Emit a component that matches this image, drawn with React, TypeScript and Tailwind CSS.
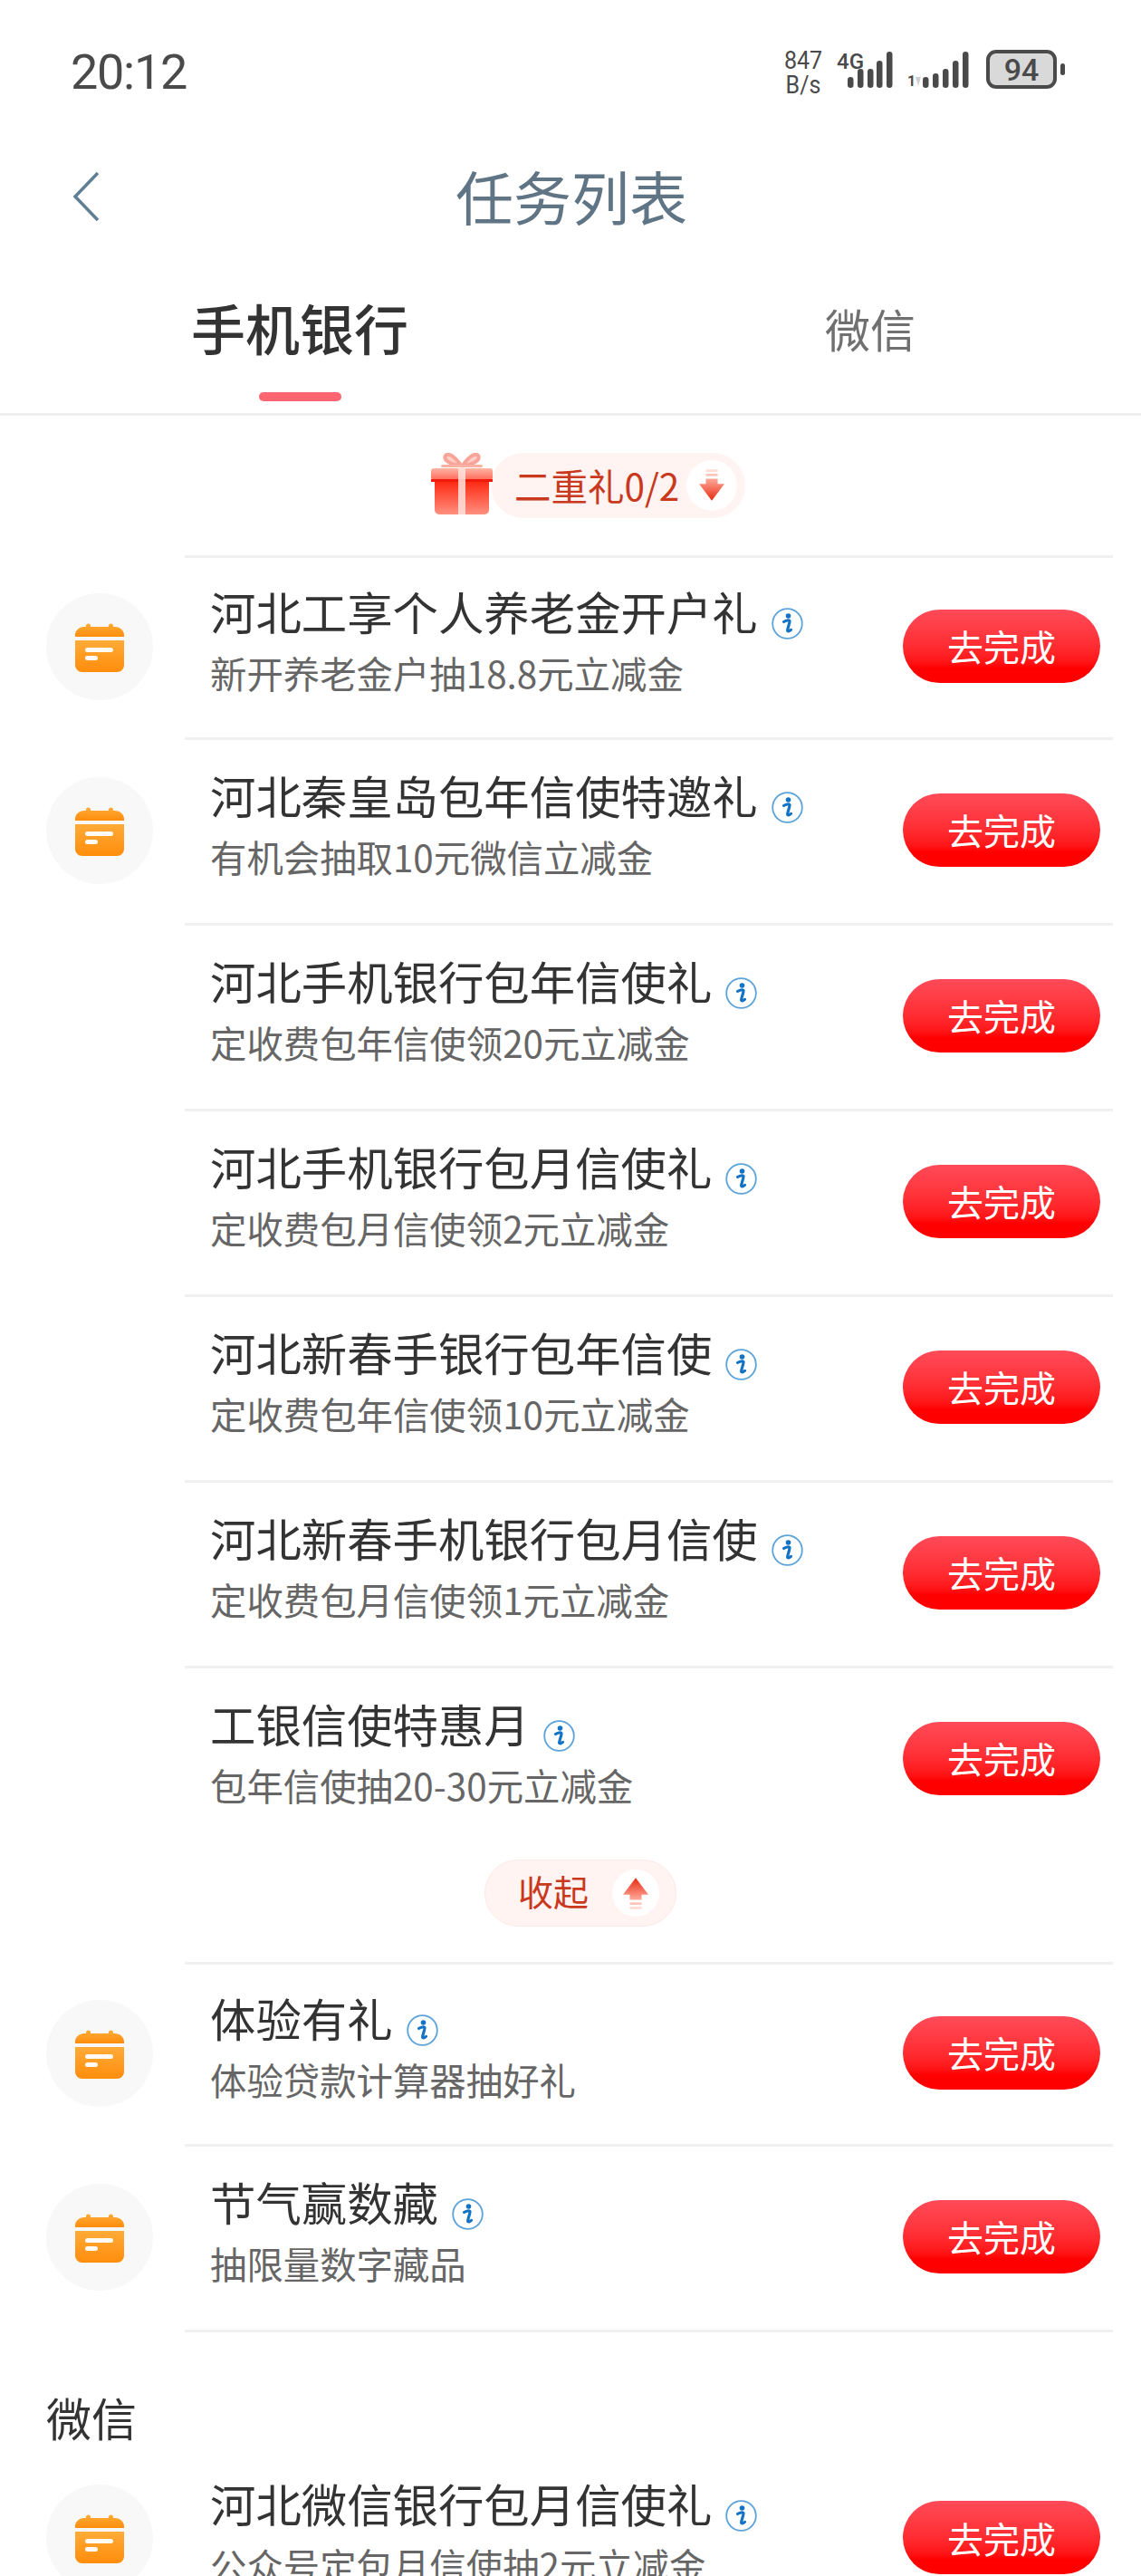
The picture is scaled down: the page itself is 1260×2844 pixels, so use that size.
import React from "react";

const FONT = "font-['Noto_Sans_CJK_SC','Noto_Sans_CJK_SC',sans-serif]";

function Bars({ tops, xs, w, id }: { tops: number[]; xs: number[]; w: number; id: string }) {
  return (
    <svg width={w} height="44" viewBox={`0 0 ${w} 44`} aria-label={id}>
      {xs.map((x, i) => (
        <rect key={i} x={x} y={tops[i]} width="6.5" height={42 - tops[i]} rx="3.2" fill="#4a4a4a" />
      ))}
    </svg>
  );
}

function Calendar() {
  return (
    <svg width="54" height="56" viewBox="0 0 54 56">
      <defs>
        <linearGradient id="cal" x1="0" y1="0" x2="0" y2="1">
          <stop offset="0" stopColor="#ffab38" />
          <stop offset="1" stopColor="#ff8d0c" />
        </linearGradient>
      </defs>
      <path d="M12 5a2.500 2.500 0 0 1 5 0v1h20V5a2.500 2.500 0 0 1 5 0v1h2c5.500 0 10 4 10 9v2H0v-2c0-5 4.500-9 10-9h2z" fill="url(#cal)" />
      <path d="M0 21h54v27c0 4.500-3.500 8-8 8H8c-4.500 0-8-3.500-8-8z" fill="url(#cal)" />
      <rect x="11" y="29" width="31" height="5" rx="2.500" fill="#fff" opacity="0.95" />
      <rect x="11" y="38" width="14" height="5" rx="2.500" fill="#fff" opacity="0.95" />
    </svg>
  );
}

function Info() {
  return (
    <svg width="35" height="35" viewBox="0 0 35 35" className="shrink-0">
      <circle cx="17.500" cy="17.500" r="16.300" fill="#fff" stroke="#5ba3d9" strokeWidth="1.800" />
      <circle cx="18.500" cy="9" r="2.800" fill="#1273c4" />
      <path d="M13.500 15.500c2-1.300 6-2.300 6.500-1 .4 1.500-2.400 8.500-2.400 10.500 0 1.500 2 1 3.900-.6" fill="none" stroke="#1273c4" strokeWidth="3.200" strokeLinecap="round" />
    </svg>
  );
}

function ArrowDown({ up = false }: { up?: boolean }) {
  const gid = up ? "arrU" : "arrD";
  return (
    <svg width="28" height="36" viewBox="0 0 30 38" className={up ? "rotate-180" : ""}>
      <defs>
        <linearGradient id={gid} x1="0" y1="0" x2="0" y2="1">
          <stop offset="0" stopColor="#ffa99a" />
          <stop offset="1" stopColor="#e82a10" />
        </linearGradient>
      </defs>
      <rect x="8" y="0" width="14" height="3" fill="#ffdcd5" />
      <rect x="8" y="5" width="14" height="3" fill="#ffc6ba" />
      <path d="M8 11h14v6h8L15 37 0 17h8z" fill={`url(#${gid})`} />
    </svg>
  );
}

function Gift() {
  return (
    <svg width="70" height="70" viewBox="0 0 70 70" className="shrink-0">
      <defs>
        <linearGradient id="giftBody" x1="0" y1="0" x2="0" y2="1">
          <stop offset="0" stopColor="#ff2a12" />
          <stop offset="1" stopColor="#ff9080" />
        </linearGradient>
        <linearGradient id="giftLid" x1="0" y1="0" x2="0" y2="1">
          <stop offset="0" stopColor="#ffb4a6" />
          <stop offset="1" stopColor="#ff6a58" />
        </linearGradient>
      </defs>
      <path d="M34 14C27 3 20 0 17 3c-3 4 4 10 17 11zM36 14C43 3 50 0 53 3c3 4-4 10-17 11z" fill="#fcd0c8" stroke="#f9a498" strokeWidth="4" />
      <rect x="12" y="13" width="46" height="3" rx="1.500" fill="#fbb0a4" />
      <rect x="1" y="17" width="68" height="13" rx="3" fill="url(#giftLid)" />
      <rect x="1" y="29" width="68" height="3" fill="#f01a0a" />
      <path d="M5 32h60v31a5 5 0 0 1-5 5H10a5 5 0 0 1-5-5z" fill="url(#giftBody)" />
      <rect x="31" y="17" width="8" height="51" fill="#ffe3de" opacity="0.85" />
    </svg>
  );
}

function RowText({ title, sub }: { title: string; sub: string }) {
  return (
    <>
      <div className="flex items-center h-[72px]">
        <span className="text-[50.4px] leading-[72px] text-[#333333] whitespace-nowrap">{title}</span>
        <span className="ml-[15px] mt-[26px] flex"><Info /></span>
      </div>
      <div className="mt-[4px] text-[40.4px] leading-[56px] text-[#666666] whitespace-nowrap">{sub}</div>
    </>
  );
}

function Row({ title, sub, icon, h = "h-[205px]" }: { title: string; sub: string; icon?: boolean; h?: string }) {
  return (
    <div className={`flex ${h} shrink-0`}>
      <div className="w-[204px] shrink-0 pl-[51px] flex items-center">
        {icon && (
          <div className="w-[118px] h-[118px] rounded-full bg-[#f8f8f8] flex items-center justify-center">
            <Calendar />
          </div>
        )}
      </div>
      <div className="w-[1025px] border-t-[3px] border-[#f0f0f0] flex items-center pl-[28px] pr-[14px]">
        <div className="flex-1 min-w-0 pb-[20px]">
          <RowText title={title} sub={sub} />
        </div>
        <button className="w-[218px] h-[81px] mb-[4px] rounded-full bg-linear-to-b from-[#ff4a58] to-[#ff0000] to-80% text-white text-[40px] leading-none flex items-center justify-center">
          去完成
        </button>
      </div>
    </div>
  );
}

export default function App() {
  return (
    <div className={`w-[1260px] h-[2844px] overflow-hidden bg-white flex flex-col ${FONT}`}>
      {/* status bar */}
      <div className="h-[160px] shrink-0 flex items-start justify-between pl-[78px] pr-[84px] pt-[46px]">
        <span className="text-[54px] leading-[68px] text-[#4a4a4a] font-['Roboto',sans-serif] tracking-[-1.300px]">20:12</span>
        <div className="flex items-start pt-[9px] font-['Roboto',sans-serif] text-[#4a4a4a]">
          <div className="w-[50px] text-[25px] leading-[25px] text-center mr-[12px] scale-y-110">
            <div>847</div>
            <div>B/s</div>
          </div>
          <div className="relative w-[62px] mr-[16px]">
            <Bars id="sim1" w={62} xs={[12, 23, 34, 44, 55]} tops={[30, 21, 21, 12, 2]} />
            <span className="absolute left-0 top-[0px] text-[24px] leading-[26px] font-medium">4G</span>
          </div>
          <div className="relative w-[78px] mr-[9px]">
            <Bars id="sim2" w={78} xs={[17, 28, 39, 50, 61]} tops={[30, 26, 21, 12, 2]} />
            <span className="absolute left-0 top-[27px] text-[16px] leading-[16px] font-bold">1</span>
            <span className="absolute left-[9px] top-[30px] w-0 h-0 border-x-[3px] border-t-[10px] border-x-transparent border-t-[#cfcfcf]" />
          </div>
          <div className="flex items-center">
            <div className="w-[78px] h-[43px] rounded-[11px] border-[4px] border-[#4a4a4a] bg-[#d9d9d9] flex items-center justify-center text-[34px] leading-none font-medium">
              94
            </div>
            <div className="ml-[4px] w-[5px] h-[13px] rounded-full bg-[#4a4a4a]" />
          </div>
        </div>
      </div>

      {/* nav */}
      <div className="h-[110px] shrink-0 relative flex items-center justify-center">
        <svg width="32" height="56" viewBox="0 0 32 56" className="absolute left-[79px] top-[29px]">
          <path d="M29 2 4 28l25 26" fill="none" stroke="#5f7f95" strokeWidth="3.500" />
        </svg>
        <span className="ml-[2px] text-[64px] leading-[80px] text-[#5f7485]">任务列表</span>
      </div>

      {/* tabs */}
      <div className="h-[189px] shrink-0 border-b-[3px] border-[#efefef] flex relative">
        <div className="w-[662px] flex flex-col items-center pt-[51px]">
          <span className="text-[60px] leading-[80px] text-[#333333] font-medium">手机银行</span>
          <div className="mt-[32px] w-[91px] h-[10px] rounded-full bg-[#fd6670]" />
        </div>
        <div className="w-[598px] flex justify-center pt-[57px]">
          <span className="text-[50px] leading-[70px] text-[#707070]">微信</span>
        </div>
      </div>

      {/* gift */}
      <div className="h-[154px] shrink-0 flex items-center justify-center pl-[38px]">
        <div className="flex items-center">
          <div className="z-10 flex -mr-[3px] -mt-[3px]"><Gift /></div>
          <div className="h-[72px] w-[281px] rounded-full bg-[#fff4f2] flex items-center pl-[26px] pr-[9px] justify-between">
            <span className="text-[40.500px] leading-none text-[#c8391d] whitespace-nowrap">二重礼0/2</span>
            <span className="w-[56px] h-[56px] rounded-full bg-white flex items-center justify-center">
              <ArrowDown />
            </span>
          </div>
        </div>
      </div>

      <Row h="h-[201px]" icon title="河北工享个人养老金开户礼" sub="新开养老金户抽18.8元立减金" />
      <Row icon title="河北秦皇岛包年信使特邀礼" sub="有机会抽取10元微信立减金" />
      <Row title="河北手机银行包年信使礼" sub="定收费包年信使领20元立减金" />
      <Row title="河北手机银行包月信使礼" sub="定收费包月信使领2元立减金" />
      <Row title="河北新春手银行包年信使" sub="定收费包年信使领10元立减金" />
      <Row title="河北新春手机银行包月信使" sub="定收费包月信使领1元立减金" />
      <Row title="工银信使特惠月" sub="包年信使抽20-30元立减金" />

      {/* collapse */}
      <div className="h-[122px] shrink-0 flex items-start justify-center pl-[22px] pt-[9px]">
        <div className="w-[212px] h-[74px] rounded-full bg-[#fff4f2] border border-[#fdeae6] flex items-center pl-[36px] pr-[18px] justify-between">
          <span className="text-[39px] leading-none text-[#c8391d] -mt-[5px]">收起</span>
          <span className="w-[52px] h-[52px] rounded-full bg-white flex items-center justify-center">
            <ArrowDown up />
          </span>
        </div>
      </div>

      <Row h="h-[201px]" icon title="体验有礼" sub="体验贷款计算器抽好礼" />
      <Row icon title="节气赢数藏" sub="抽限量数字藏品" />
      <div className="flex h-[3px] shrink-0 pl-[204px]">
        <div className="w-[1025px] bg-[#f0f0f0]" />
      </div>

      {/* wechat section */}
      <div className="h-[168px] shrink-0 pl-[51px] pt-[58px]">
        <span className="text-[50px] leading-[70px] text-[#333333]">微信</span>
      </div>
      <div className="flex h-[205px] shrink-0">
        <div className="w-[204px] shrink-0 pl-[51px]">
          <div className="w-[118px] h-[118px] rounded-full bg-[#f8f8f8] flex items-center justify-center">
            <Calendar />
          </div>
        </div>
        <div className="w-[1025px] flex items-start pl-[28px] pr-[14px]">
          <div className="flex-1 min-w-0 -mt-[15px]">
            <RowText title="河北微信银行包月信使礼" sub="公众号定包月信使抽2元立减金" />
          </div>
          <button className="w-[218px] h-[81px] mt-[18px] rounded-full bg-linear-to-b from-[#ff4a58] to-[#ff0000] to-80% text-white text-[40px] leading-none flex items-center justify-center">
            去完成
          </button>
        </div>
      </div>
    </div>
  );
}
